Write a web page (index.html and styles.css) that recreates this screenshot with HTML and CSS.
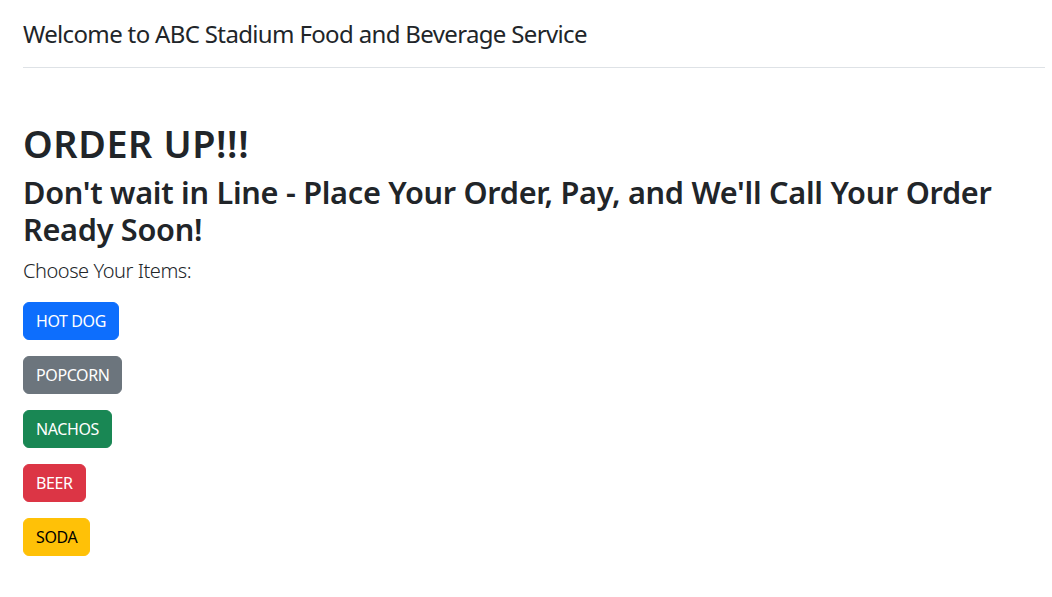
FILE: index.html
```html
<!DOCTYPE html>
<html lang="en">
<head>
<meta charset="utf-8">
<title>ABC Stadium</title>
<link rel="stylesheet" href="styles.css">
</head>
<body>
<header class="site-header">
  <span class="brand">Welcome to ABC Stadium Food and Beverage Service</span>
</header>
<main class="content">
  <h1 class="title">ORDER UP!!!</h1>
  <h2 class="subtitle">Don't wait in Line - Place Your Order, Pay, and We'll Call Your Order Ready Soon!</h2>
  <p class="lead">Choose Your Items:</p>
  <div class="items">
    <button class="btn btn-primary">HOT DOG</button>
    <button class="btn btn-secondary">POPCORN</button>
    <button class="btn btn-success">NACHOS</button>
    <button class="btn btn-danger">BEER</button>
    <button class="btn btn-warning">SODA</button>
  </div>
</main>
</body>
</html>
```
FILE: styles.css
```css
* { box-sizing: border-box; }
body {
  margin: 0;
  font-family: "Noto Sans", "Open Sans", sans-serif;
  color: #212529;
  background: #fff;
  font-size: 16px;
  line-height: 1.5;
}
.site-header {
  margin: 0 7px 0 23px;
  padding: 16px 0 15px;
  border-bottom: 1px solid #dee2e6;
  font-size: 24px;
  line-height: 36px;
  letter-spacing: -0.65px;
}
.content {
  padding: 53px 23px 0;
}
.title {
  margin: 0 0 8px;
  font-size: 37.78px;
  font-weight: 600;
  line-height: 1.2;
  letter-spacing: 0.6px;
}
.subtitle {
  margin: 0 0 8px;
  font-size: 30.67px;
  font-weight: 600;
  line-height: 1.2;
  letter-spacing: -0.28px;
}
.lead {
  margin: 0 0 16px;
  font-size: 20px;
  font-weight: 300;
  line-height: 30px;
  letter-spacing: -0.45px;
}
.items {
  display: flex;
  flex-direction: column;
  align-items: flex-start;
  gap: 16px;
}
.btn {
  font-family: inherit;
  font-size: 16px;
  line-height: 24px;
  letter-spacing: -0.4px;
  padding: 6px 12px;
  border: 1px solid transparent;
  border-radius: 6px;
  color: #fff;
}
.btn-primary { background: #0d6efd; border-color: #0d6efd; }
.btn-secondary { background: #6c757d; border-color: #6c757d; }
.btn-success { background: #198754; border-color: #198754; }
.btn-danger { background: #dc3545; border-color: #dc3545; }
.btn-warning { background: #ffc107; border-color: #ffc107; color: #000; }
```
